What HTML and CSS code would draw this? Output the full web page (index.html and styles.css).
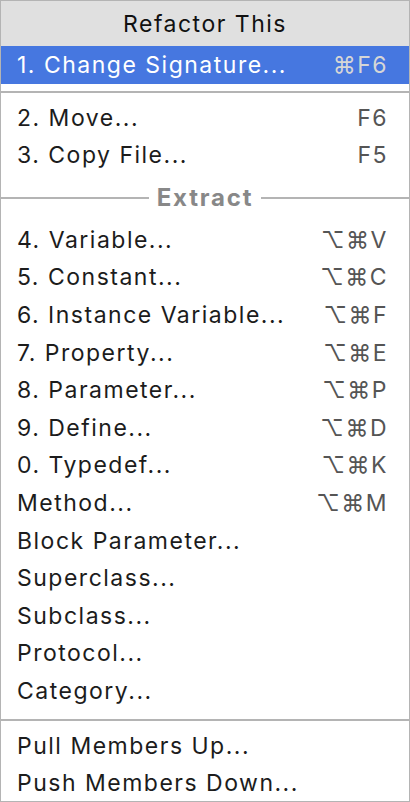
FILE: index.html
```html
<!DOCTYPE html>
<html lang="en">
<head>
    <meta charset="UTF-8">
    <meta name="viewport" content="width=device-width, initial-scale=1.0">
    <title>Refactor This</title>
    <link rel="stylesheet" href="styles.css">
</head>
<body>
    <div class="menu">
        <div class="title">Refactor This</div>

        <div class="item selected"><span class="label">1. Change Signature...</span><span class="key">⌘F6</span></div>

        <div class="sep"></div>

        <div class="item"><span class="label">2. Move...</span><span class="key">F6</span></div>
        <div class="item"><span class="label">3. Copy File...</span><span class="key">F5</span></div>

        <div class="group"><span>Extract</span></div>

        <div class="item"><span class="label">4. Variable...</span><span class="key">⌥⌘V</span></div>
        <div class="item"><span class="label">5. Constant...</span><span class="key">⌥⌘C</span></div>
        <div class="item"><span class="label">6. Instance Variable...</span><span class="key">⌥⌘F</span></div>
        <div class="item"><span class="label">7. Property...</span><span class="key">⌥⌘E</span></div>
        <div class="item"><span class="label">8. Parameter...</span><span class="key">⌥⌘P</span></div>
        <div class="item"><span class="label">9. Define...</span><span class="key">⌥⌘D</span></div>
        <div class="item"><span class="label">0. Typedef...</span><span class="key">⌥⌘K</span></div>
        <div class="item"><span class="label">Method...</span><span class="key">⌥⌘M</span></div>
        <div class="item"><span class="label">Block Parameter...</span></div>
        <div class="item"><span class="label">Superclass...</span></div>
        <div class="item"><span class="label">Subclass...</span></div>
        <div class="item"><span class="label">Protocol...</span></div>
        <div class="item"><span class="label">Category...</span></div>

        <div class="sep bottom"></div>

        <div class="item"><span class="label">Pull Members Up...</span></div>
        <div class="item"><span class="label">Push Members Down...</span></div>
    </div>
</body>
</html>
```

FILE: styles.css
```css
* {
    margin: 0;
    padding: 0;
    box-sizing: border-box;
}

body {
    font-family: Inter, "Liberation Sans", "DejaVu Sans", sans-serif;
    background-color: #fff;
    width: 410px;
    height: 802px;
    overflow: hidden;
}

.menu {
    width: 410px;
    height: 802px;
    border: 1px solid #b4b4b4;
    background-color: #fff;
    overflow: hidden;
    font-size: 23px;
    letter-spacing: 1.5px;
    color: #1c1c1c;
}

.title {
    height: 45px;
    background-color: #e0e0e0;
    display: flex;
    align-items: center;
    justify-content: center;
    color: #111;
}

.item {
    height: 37.6px;
    display: flex;
    align-items: center;
    justify-content: space-between;
    padding: 0 21px 0 16px;
}

.item.selected {
    height: 38px;
    background-color: #4677e0;
    color: #fff;
}

.key {
    color: #555;
}

.selected .key {
    color: #d6d6d6;
}

.sep {
    height: 15px;
    padding-top: 7px;
}

.sep.bottom {
    height: 17px;
    padding-top: 9px;
}

.sep::before {
    content: "";
    display: block;
    height: 2px;
    background-color: #b4b4b4;
}

.group {
    height: 46.8px;
    display: flex;
    align-items: center;
    gap: 8px;
    color: #888;
    font-size: 24px;
    font-weight: 700;
    letter-spacing: 1.8px;
}

.group::before,
.group::after {
    content: "";
    flex: 1;
    height: 2px;
    background-color: #b4b4b4;
}
```
